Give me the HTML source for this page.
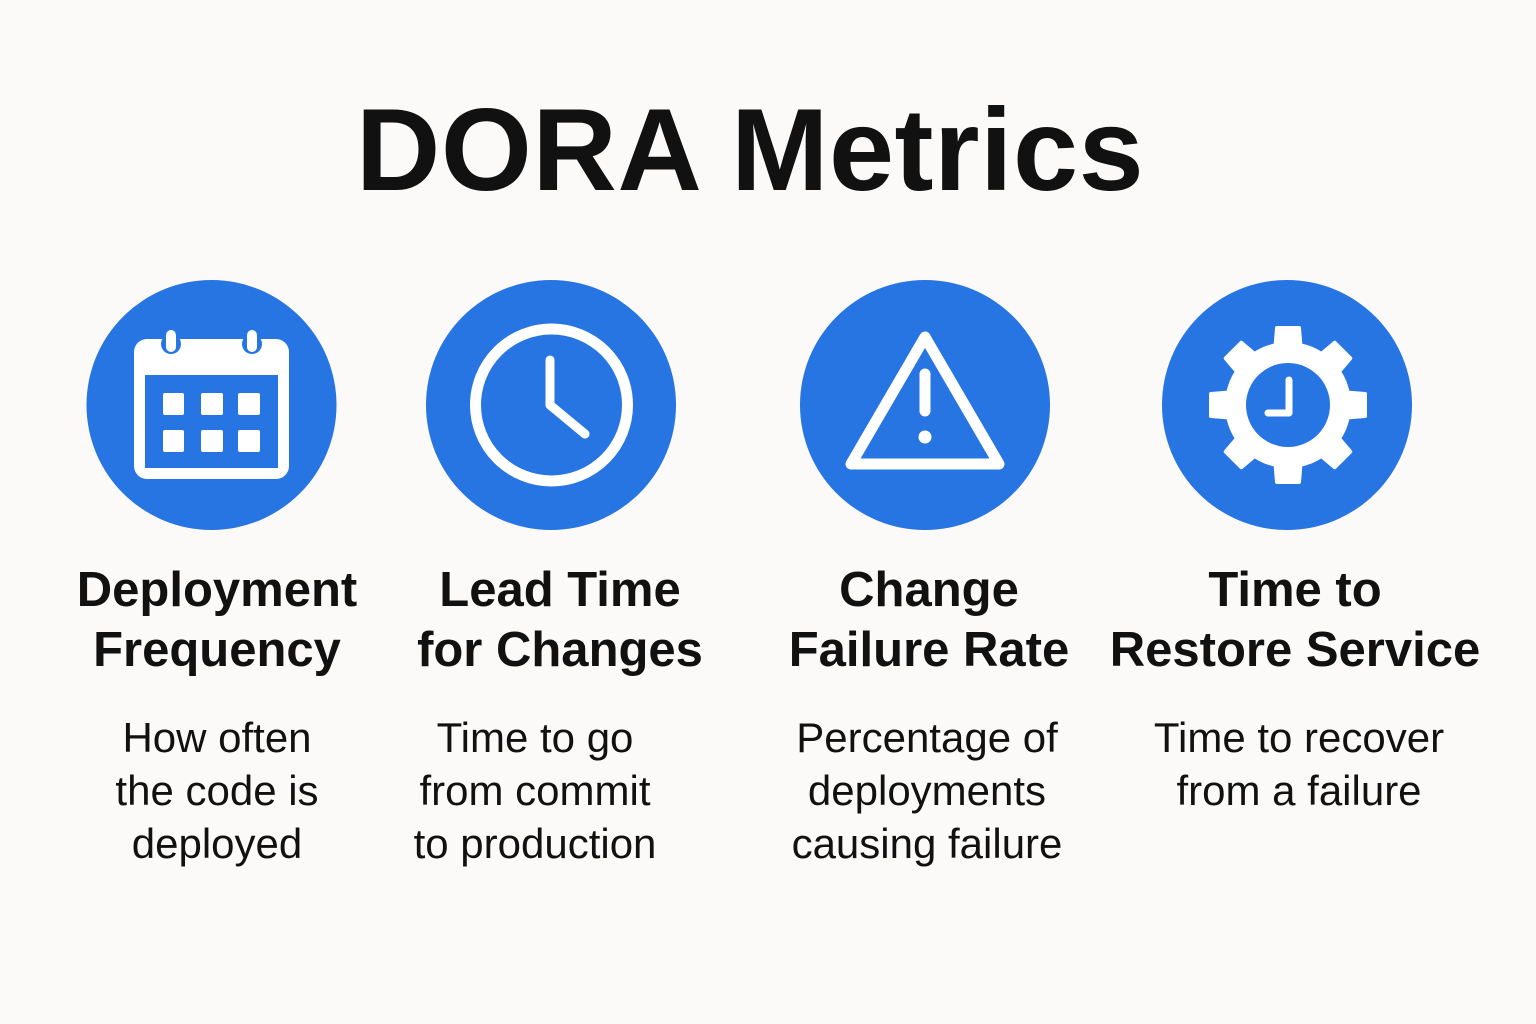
<!DOCTYPE html>
<html><head><meta charset="utf-8"><style>
body{margin:0;width:1536px;height:1024px;background:#fbfaf8;position:relative;overflow:hidden;font-family:"Liberation Sans",sans-serif;color:#111}
.t{position:absolute;left:0;width:1536px;top:85px;text-align:center;font-weight:bold;font-size:117px;line-height:130px;letter-spacing:0.5px;text-indent:-36px}
.l{position:absolute;width:420px;text-align:center;font-weight:bold;font-size:49px;line-height:60px;top:560px;letter-spacing:0px}
.d{position:absolute;width:400px;text-align:center;font-size:42px;line-height:53px;top:711px}
svg{position:absolute;left:0;top:0}
</style></head><body>
<svg width="1536" height="1024" viewBox="0 0 1536 1024">
<g fill="#2775e3">
<circle cx="211.5" cy="405" r="125"/><circle cx="551" cy="405" r="125"/><circle cx="925" cy="405" r="125"/><circle cx="1287" cy="405" r="125"/>
</g>
<rect x="134" y="339" width="155" height="140" rx="13" fill="#fff"/>
<rect x="145" y="375" width="133" height="93" fill="#2775e3"/>
<circle cx="171" cy="344" r="10" fill="#2775e3"/><circle cx="252" cy="344" r="10" fill="#2775e3"/>
<rect x="166" y="330" width="10" height="22" rx="5" fill="#fff"/><rect x="247" y="330" width="10" height="22" rx="5" fill="#fff"/>
<g fill="#fff">
<rect x="163" y="393" width="21" height="22" rx="2"/><rect x="201" y="393" width="22" height="22" rx="2"/><rect x="238" y="393" width="22" height="22" rx="2"/>
<rect x="163" y="430" width="21" height="22" rx="2"/><rect x="201" y="430" width="22" height="22" rx="2"/><rect x="238" y="430" width="22" height="22" rx="2"/>
</g>
<circle cx="551.5" cy="405" r="76" fill="none" stroke="#fff" stroke-width="11"/>
<path d="M550 360V405L585 434" fill="none" stroke="#fff" stroke-width="9" stroke-linecap="round" stroke-linejoin="round"/>
<path d="M925 337L851 464H999Z" fill="none" stroke="#fff" stroke-width="11" stroke-linejoin="round"/>
<path d="M925 374V411" stroke="#fff" stroke-width="11" stroke-linecap="round"/>
<circle cx="925" cy="437" r="6.5" fill="#fff"/>
<g transform="translate(1288 405)" fill="#fff">
<circle r="63"/>
<g id="tooth"><path d="M-15 -53L-13 -77Q-13 -79 -11 -79H11Q13 -79 13 -77L15 -53Z"/></g>
<use href="#tooth" transform="rotate(45)"/><use href="#tooth" transform="rotate(90)"/><use href="#tooth" transform="rotate(135)"/>
<use href="#tooth" transform="rotate(180)"/><use href="#tooth" transform="rotate(225)"/><use href="#tooth" transform="rotate(270)"/><use href="#tooth" transform="rotate(315)"/>
<circle r="42" fill="#2775e3"/>
<path d="M1 -25V8H-20" fill="none" stroke="#fff" stroke-width="7" stroke-linecap="round" stroke-linejoin="round"/>
</g>
</svg>
<div class="t">DORA Metrics</div>
<div class="l" style="left:7px">Deployment<br>Frequency</div>
<div class="l" style="left:350px">Lead Time<br>for Changes</div>
<div class="l" style="left:719px">Change<br>Failure Rate</div>
<div class="l" style="left:1085px">Time to<br>Restore Service</div>
<div class="d" style="left:17px">How often<br>the code is<br>deployed</div>
<div class="d" style="left:335px">Time to go<br>from commit<br>to production</div>
<div class="d" style="left:727px">Percentage of<br>deployments<br>causing failure</div>
<div class="d" style="left:1099px">Time to recover<br>from a failure</div>
</body></html>
